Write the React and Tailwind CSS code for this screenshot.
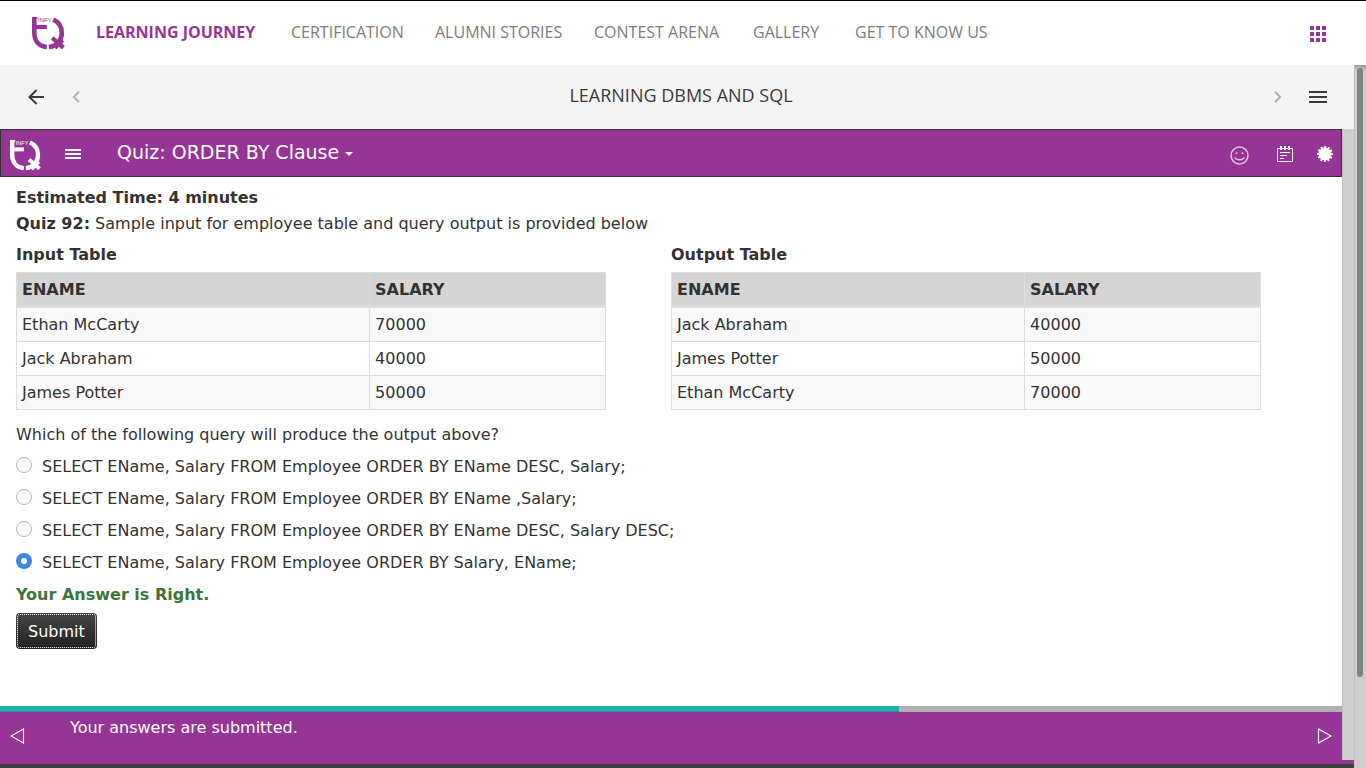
import React, { useState } from "react";

const navItems = [
  { label: "CERTIFICATION", width: "w-28" },
  { label: "ALUMNI STORIES", width: "w-[127px]" },
  { label: "CONTEST ARENA", width: "w-[127px]" },
  { label: "GALLERY", width: "w-[70px]" },
  { label: "GET TO KNOW US", width: "w-[134px]" },
];

const inputRows = [
  ["Ethan McCarty", "70000"],
  ["Jack Abraham", "40000"],
  ["James Potter", "50000"],
];

const outputRows = [
  ["Jack Abraham", "40000"],
  ["James Potter", "50000"],
  ["Ethan McCarty", "70000"],
];

const options = [
  "SELECT EName, Salary FROM Employee ORDER BY EName DESC, Salary;",
  "SELECT EName, Salary FROM Employee ORDER BY EName ,Salary;",
  "SELECT EName, Salary FROM Employee ORDER BY EName DESC, Salary DESC;",
  "SELECT EName, Salary FROM Employee ORDER BY Salary, EName;",
];

function Logo({ className }) {
  return (
    <svg viewBox="0 0 33 33" className={className} fill="none" stroke="currentColor" aria-label="InfyTQ">
      <path d="M2.3 0V15.5C2.3 24 7 29.4 14.8 30" strokeWidth="4.6" />
      <path d="M2 10H14.8" strokeWidth="4.2" />
      <path d="M21.2 2.6C27 5 29.8 9.5 29.8 16C29.8 23.5 24.5 29.4 16.8 30" strokeWidth="4.6" />
      <path d="M20.2 20.8L31.4 30.6" strokeWidth="4.2" />
      <path d="M30.6 23.2L23 31" strokeWidth="4" />
      <path d="M0 0.8H5.5" strokeWidth="1.6" />
      <text x="6" y="5.4" fontSize="6" fill="currentColor" stroke="none" fontFamily="Liberation Sans, sans-serif">
        INFY
      </text>
    </svg>
  );
}

function ResultTable({ title, rows }) {
  return (
    <section className="w-1/2">
      <h2 className="font-bold leading-6">{title}</h2>
      <table className="mt-[5px] w-[90%] table-fixed border-collapse border border-[#dddddd] text-left">
        <thead>
          <tr className="h-[34px] border-b-2 border-[#dddddd] bg-[#d5d5d5]">
            <th className="w-3/5 border-r border-[#dddddd] px-[5px] pt-0.5 leading-6">ENAME</th>
            <th className="px-[5px] pt-0.5 leading-6">SALARY</th>
          </tr>
        </thead>
        <tbody>
          {rows.map(([name, salary]) => (
            <tr key={name} className="border-b border-[#dddddd] odd:bg-[#f9f9f9]">
              <td className="border-r border-[#dddddd] px-[5px] py-1 leading-[25px]">{name}</td>
              <td className="px-[5px] py-1 leading-[25px]">{salary}</td>
            </tr>
          ))}
        </tbody>
      </table>
    </section>
  );
}

function TopNav() {
  return (
    <header className="flex h-[65px] shrink-0 items-center border-t border-black bg-white pl-8 pr-10 font-['Open_Sans',sans-serif] text-base text-[#7d7d7d]">
      <a href="#home" className="text-[#963596]">
        <Logo className="h-[33px] w-[33px]" />
      </a>
      <nav className="ml-[31px] flex flex-1 gap-8 whitespace-nowrap pb-0.5">
        <a href="#journey" className="w-[163px] font-bold text-[#963596]">LEARNING JOURNEY</a>
        {navItems.map((item) => (
          <a key={item.label} href="#nav" className={item.width}>{item.label}</a>
        ))}
      </nav>
      <button aria-label="Apps" className="grid grid-cols-3 gap-0.5 pt-0.5">
        {Array.from({ length: 9 }, (_, i) => (
          <span key={i} className="size-1 bg-[#963596]" />
        ))}
      </button>
    </header>
  );
}

function CourseBar() {
  return (
    <div className="flex h-16 shrink-0 items-center bg-[#f4f4f4] pl-7 pr-[27px] text-[#3b3b3b]">
      <button aria-label="Back">
        <svg className="h-4 w-4" viewBox="0 0 16 16" fill="none" stroke="currentColor" strokeWidth="2">
          <path d="M8.6 1L1.5 8L8.6 15M1.5 8H16" />
        </svg>
      </button>
      <button aria-label="Previous" className="ml-7 text-[#b3b3b3]">
        <svg className="h-3 w-2" viewBox="0 0 8 12" fill="none" stroke="currentColor" strokeWidth="2">
          <path d="M7 .8L1.8 6L7 11.2" />
        </svg>
      </button>
      <h1 className="flex-1 pb-1 pl-2 text-center font-['Open_Sans',sans-serif] text-lg">LEARNING DBMS AND SQL</h1>
      <button aria-label="Next" className="mr-[27px] text-[#b3b3b3]">
        <svg className="h-3 w-2" viewBox="0 0 8 12" fill="none" stroke="currentColor" strokeWidth="2">
          <path d="M1 .8L6.2 6L1 11.2" />
        </svg>
      </button>
      <button aria-label="Contents" className="flex w-[18px] flex-col gap-[3px]">
        <span className="h-0.5 bg-current" />
        <span className="h-0.5 bg-current" />
        <span className="h-0.5 bg-current" />
      </button>
    </div>
  );
}

function QuizBar() {
  return (
    <div className="flex h-12 shrink-0 items-center border border-[#333333] bg-[#963596] pl-[9px] pr-2 text-white">
      <Logo className="mt-1 h-[31px] w-[31px]" />
      <button aria-label="Menu" className="ml-6 flex w-4 flex-col gap-0.5 pt-0.5">
        <span className="h-0.5 bg-white" />
        <span className="h-0.5 bg-white" />
        <span className="h-0.5 bg-white" />
      </button>
      <button className="ml-9 flex items-center gap-1.5 whitespace-nowrap pb-0.5 text-[19px]">
        Quiz: ORDER BY Clause
        <svg className="mt-1 h-1 w-2" viewBox="0 0 8 4" fill="currentColor">
          <path d="M0 0H8L4 4Z" />
        </svg>
      </button>
      <button aria-label="Feedback" className="ml-auto mt-1 text-[#e3c4e3]">
        <svg className="h-[19px] w-[19px]" viewBox="0 0 19 19" fill="none" stroke="currentColor" strokeWidth="1.5">
          <circle cx="9.5" cy="9.5" r="8.5" />
          <path d="M4.8 11.5C6.5 14.5 12.5 14.5 14.2 11.5" />
          <circle cx="6.5" cy="7.3" r="1" fill="currentColor" stroke="none" />
          <circle cx="12.5" cy="7.3" r="1" fill="currentColor" stroke="none" />
        </svg>
      </button>
      <button aria-label="Notes" className="ml-7 mt-0.5">
        <svg className="h-4 w-4" viewBox="0 0 16 16" fill="none" stroke="currentColor">
          <path d="M.5 2.5H15.5V15.5H.5Z" />
          <path d="M4 0V4M8 0V4M12 0V4" strokeWidth="2" />
          <path d="M3 6.5H13M3 9.5H10M3 12.5H7" />
        </svg>
      </button>
      <button aria-label="Settings" className="ml-6 mt-0.5">
        <svg className="h-4 w-4" viewBox="0 0 16 16" fill="none" stroke="currentColor">
          <circle cx="8" cy="8" r="6.4" fill="currentColor" stroke="none" />
          <circle cx="8" cy="8" r="6.9" strokeWidth="2.2" strokeDasharray="2 1.613" strokeDashoffset="1" />
        </svg>
      </button>
    </div>
  );
}

function Quiz() {
  const [selected, setSelected] = useState(3);
  return (
    <main className="min-h-0 flex-1 overflow-hidden bg-white px-4 pt-2 text-base text-[#333333]">
      <p className="font-bold leading-[26px]">Estimated Time: 4 minutes</p>
      <p className="leading-[26px]">
        <b>Quiz 92:</b> Sample input for employee table and query output is provided below
      </p>
      <div className="mt-[6px] flex">
        <ResultTable title="Input Table" rows={inputRows} />
        <ResultTable title="Output Table" rows={outputRows} />
      </div>
      <fieldset className="mt-[11px]">
        <legend className="leading-7">Which of the following query will produce the output above?</legend>
        <div className="mt-0.5 flex flex-col">
          {options.map((text, i) => (
            <label key={text} className="flex h-8 items-center gap-2.5">
              <input
                type="radio"
                name="answer"
                checked={selected === i}
                onChange={() => setSelected(i)}
                className="mb-1 size-4 appearance-none rounded-full border border-[#b6b1ac] bg-white checked:border-[5px] checked:border-[#3d87e4]"
              />
              <span>{text}</span>
            </label>
          ))}
        </div>
      </fieldset>
      <p className="mt-0.5 font-bold leading-7 text-[#3c763d]">Your Answer is Right.</p>
      <button className="mt-1 h-9 rounded-sm bg-[#222222] bg-linear-to-b from-[#444444] to-[#222222] px-3 pt-0.5 text-white outline-1 -outline-offset-2 outline-dotted outline-white">
        Submit
      </button>
    </main>
  );
}

function QuizFooter() {
  return (
    <footer className="shrink-0">
      <div className="h-1.5 bg-[#b0b0b0]">
        <div className="h-full w-[67%] border-b border-[#1d958f] bg-[#20b2aa]" />
      </div>
      <div className="flex h-12 items-center bg-[#963596] px-2.5 text-white">
        <button aria-label="Previous page">
          <svg className="h-4 w-[15px]" viewBox="0 0 15 16" fill="none" stroke="currentColor" strokeWidth="1.1">
            <path d="M13.5 1V15L1 8Z" />
          </svg>
        </button>
        <p className="ml-[45px] flex-1 pb-4">Your answers are submitted.</p>
        <button aria-label="Next page">
          <svg className="h-4 w-[15px]" viewBox="0 0 15 16" fill="none" stroke="currentColor" strokeWidth="1.1">
            <path d="M1.5 1V15L14 8Z" />
          </svg>
        </button>
      </div>
    </footer>
  );
}

export default function App() {
  return (
    <div className="flex h-screen flex-col overflow-hidden font-['DejaVu_Sans',sans-serif]">
      <TopNav />
      <div className="flex min-h-0 flex-1">
        <div className="flex min-w-0 flex-1 flex-col">
          <CourseBar />
          <div className="flex min-h-0 flex-1">
            <div className="flex min-w-0 flex-1 flex-col">
              <QuizBar />
              <Quiz />
              <QuizFooter />
            </div>
            <div className="w-3 border-l border-[#c5c2b9] bg-[#cecece]" />
          </div>
          <div className="h-1 bg-[#963596]" />
          <div className="h-1 bg-[#404040]" />
        </div>
        <div className="w-3 border-l border-[#c5c2b9] bg-[#cecece] bg-[linear-gradient(to_bottom,#999999,#cecece_6px)] pl-0.5 pt-[3px]">
          <div className="h-[87%] w-1.5 rounded-full bg-[#7f8383]" />
        </div>
      </div>
    </div>
  );
}
